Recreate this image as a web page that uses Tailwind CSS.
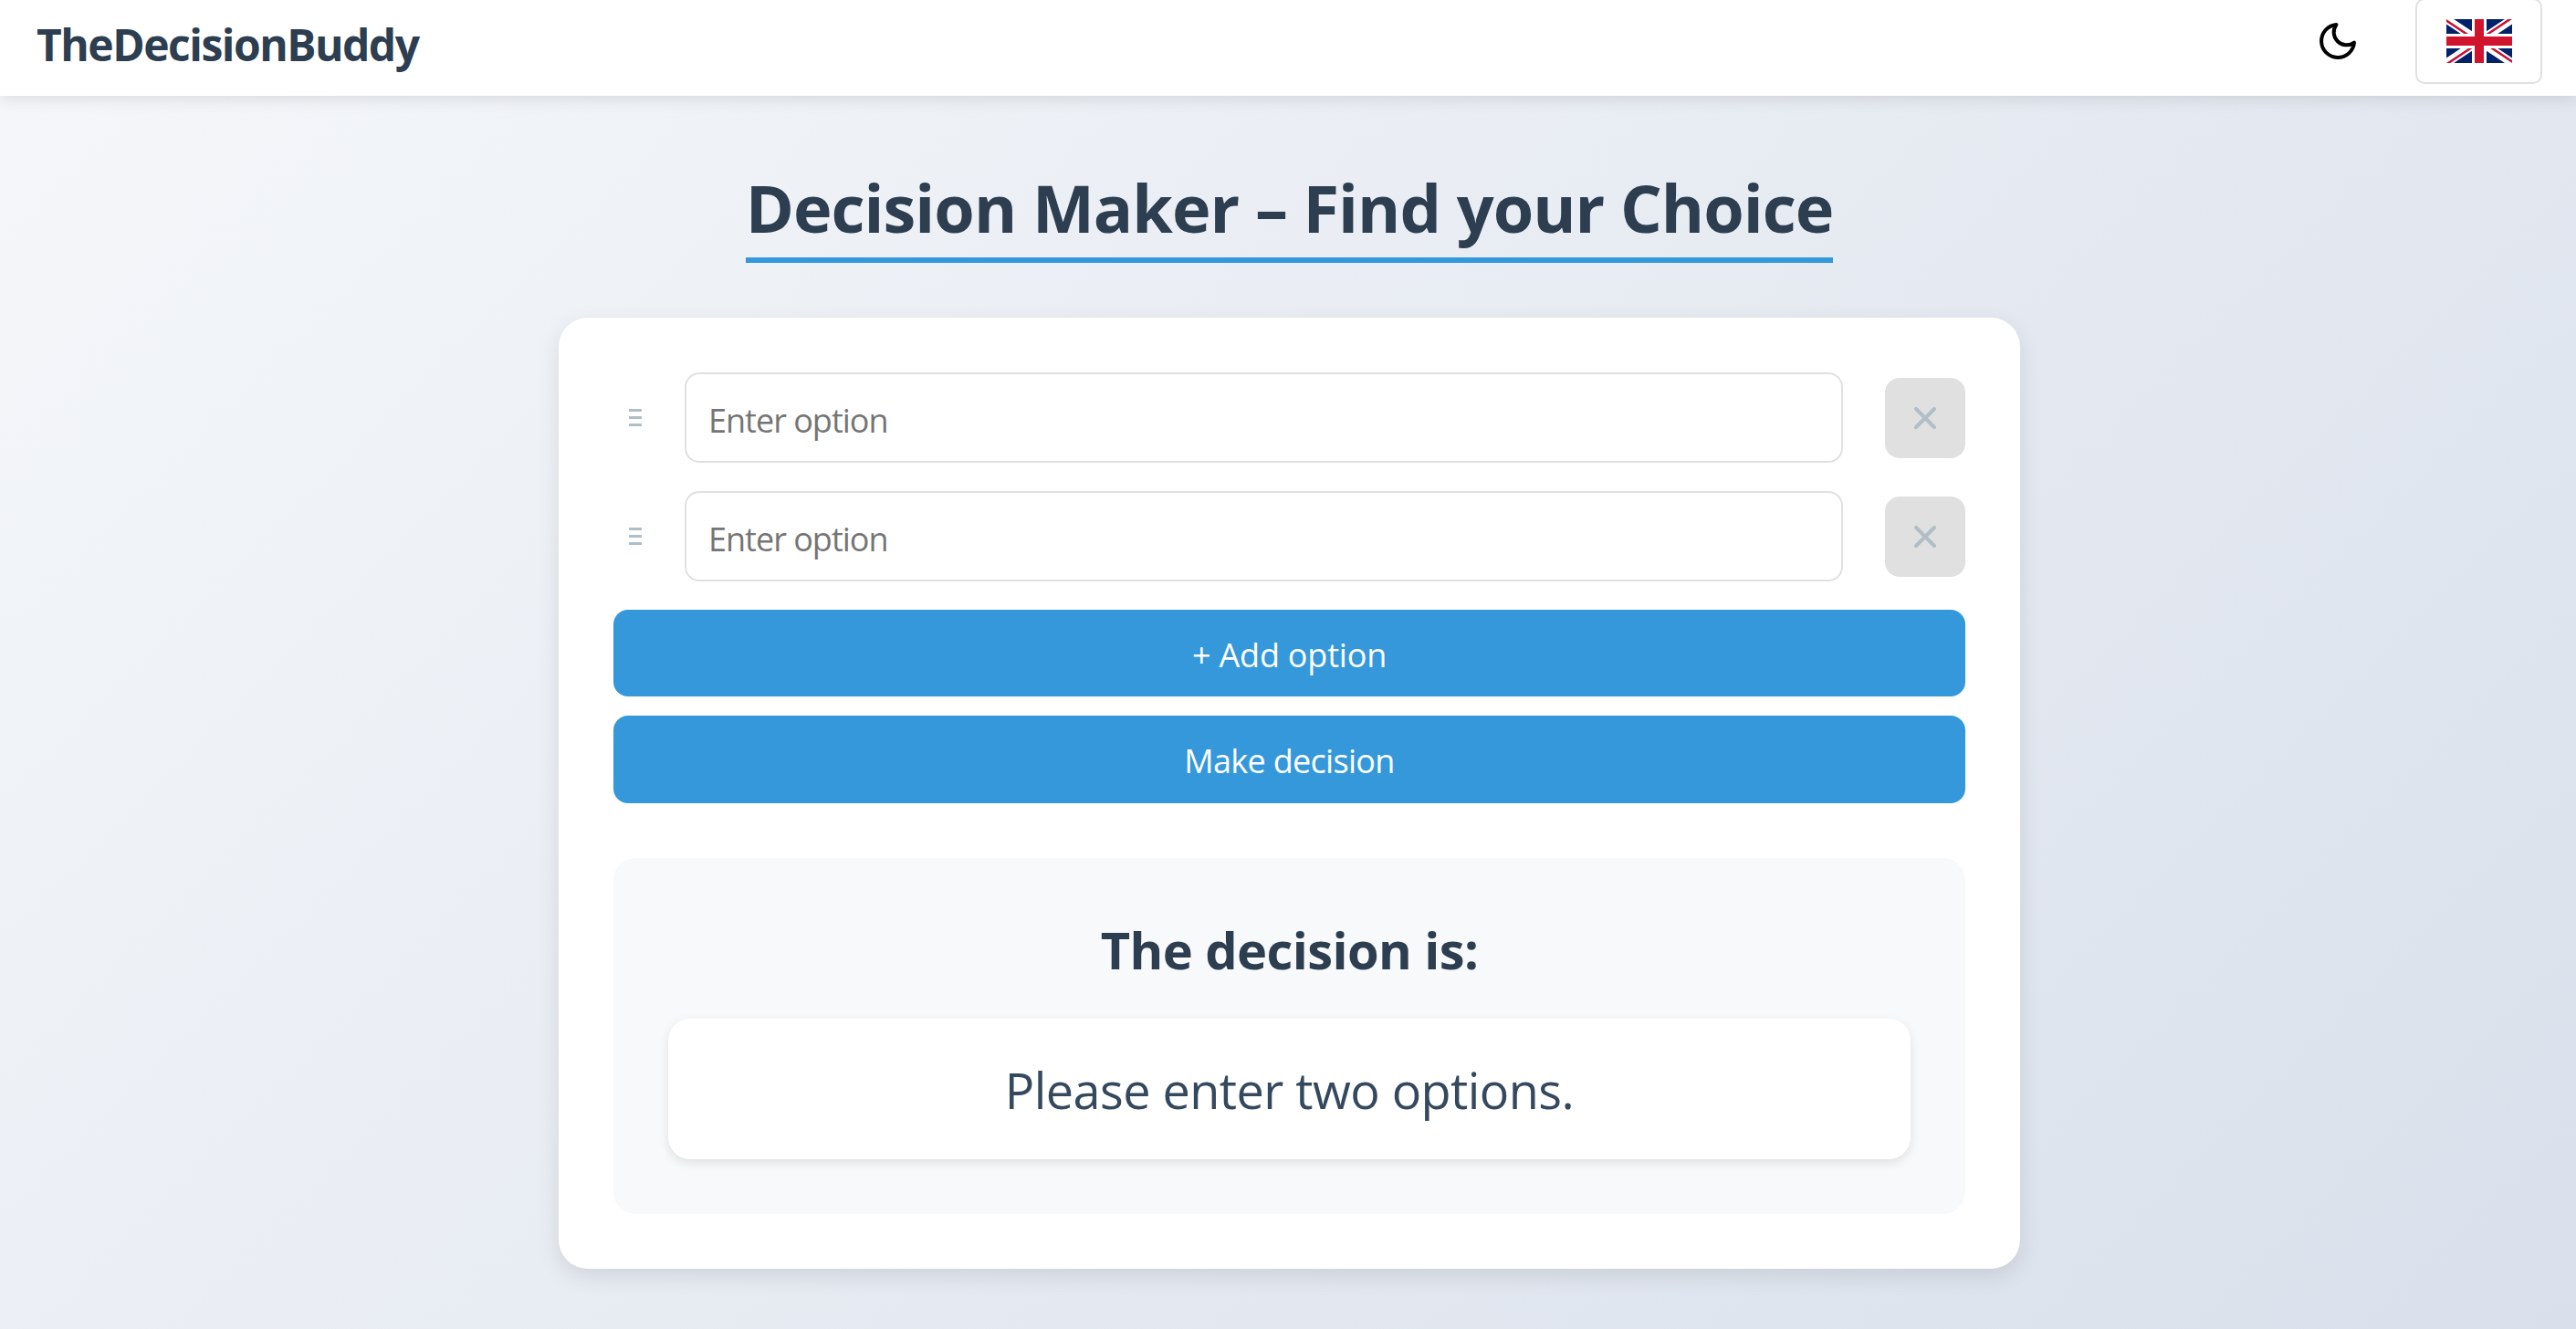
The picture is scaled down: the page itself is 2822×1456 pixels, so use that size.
<!DOCTYPE html>
<html lang="en">
<head>
  <meta charset="UTF-8" />
  <title>TheDecisionBuddy</title>
  <script src="https://cdn.jsdelivr.net/npm/@tailwindcss/browser@4"></script>
</head>
<body class="min-h-screen bg-[linear-gradient(135deg,#f5f7fa,#d9e0eb)] font-['Open_Sans',sans-serif] text-[#2c3e50] overflow-hidden">
  <header class="h-[105px] bg-white shadow-[0_4px_16px_rgba(0,0,0,0.1)] flex items-center justify-between pl-[40px] pr-[37px]">
    <div class="text-[48px] leading-[64px] font-bold tracking-[-1.5px] mt-[-8px]">TheDecisionBuddy</div>
    <div class="flex items-center gap-[61px] mt-[-15px]">
      <svg class="w-[48px] h-[48px]" viewBox="0 0 24 24" fill="none" stroke="#000" stroke-width="2" stroke-linecap="round" stroke-linejoin="round"><path d="M21 12.79A9 9 0 1 1 11.21 3 7 7 0 0 0 21 12.79z"/></svg>
      <button class="w-[139px] h-[94px] border-2 border-[#e0e0e0] rounded-[10px] bg-white flex items-center justify-center">
        <svg class="w-[72px] h-[48px]" viewBox="0 0 72 48">
          <clipPath id="uk"><path d="M36,24 h36 v24 z v24 h-36 z h-36 v-24 z v-24 h36 z"/></clipPath>
          <rect width="72" height="48" fill="#012169"/>
          <path d="M0,0 L72,48 M72,0 L0,48" stroke="#fff" stroke-width="9"/>
          <path d="M0,0 L72,48 M72,0 L0,48" stroke="#c8102e" stroke-width="5" clip-path="url(#uk)"/>
          <path d="M36,0 V48 M0,24 H72" stroke="#fff" stroke-width="16"/>
          <path d="M36,0 V48 M0,24 H72" stroke="#d0142e" stroke-width="10"/>
        </svg>
      </button>
    </div>
  </header>

  <main class="flex flex-col items-center pl-[3px]">
    <h1 class="mt-[76px] mb-[60px] text-[72px] leading-[92px] font-bold tracking-[-1px] border-b-[6px] border-[#3498db] pb-[9px]">Decision Maker – Find your Choice</h1>

    <section class="w-[1601px] h-[1042px] bg-white rounded-[32px] p-[60px] shadow-[0_8px_24px_rgba(0,0,0,0.1)]">
      <div class="flex flex-col gap-[31px]">
        <div class="flex items-center h-[99px]">
          <div class="w-[78px] pl-[17px]">
            <div class="w-[14px] flex flex-col gap-[5px]">
              <span class="h-[3px] bg-[#b0bec5]"></span><span class="h-[3px] bg-[#b0bec5]"></span><span class="h-[3px] bg-[#b0bec5]"></span>
            </div>
          </div>
          <input class="w-[1269px] h-[99px] border-2 border-[#e0e0e0] rounded-[16px] px-[24px] pt-[5px] text-[36px] tracking-[-1px] placeholder:text-[#757575] outline-none" placeholder="Enter option" />
          <button class="ml-[46px] w-[88px] h-[88px] bg-[#e0e0e0] rounded-[16px] flex items-center justify-center">
            <svg class="w-[24px] h-[24px]" viewBox="0 0 24 24" fill="none" stroke="#b0bec5" stroke-width="4" stroke-linecap="round"><path d="M2 2 22 22M22 2 2 22"/></svg>
          </button>
        </div>
        <div class="flex items-center h-[99px]">
          <div class="w-[78px] pl-[17px]">
            <div class="w-[14px] flex flex-col gap-[5px]">
              <span class="h-[3px] bg-[#b0bec5]"></span><span class="h-[3px] bg-[#b0bec5]"></span><span class="h-[3px] bg-[#b0bec5]"></span>
            </div>
          </div>
          <input class="w-[1269px] h-[99px] border-2 border-[#e0e0e0] rounded-[16px] px-[24px] pt-[5px] text-[36px] tracking-[-1px] placeholder:text-[#757575] outline-none" placeholder="Enter option" />
          <button class="ml-[46px] w-[88px] h-[88px] bg-[#e0e0e0] rounded-[16px] flex items-center justify-center">
            <svg class="w-[24px] h-[24px]" viewBox="0 0 24 24" fill="none" stroke="#b0bec5" stroke-width="4" stroke-linecap="round"><path d="M2 2 22 22M22 2 2 22"/></svg>
          </button>
        </div>
        <div class="flex flex-col gap-[21px]">
          <button class="h-[95px] pt-[5px] bg-[#3498db] text-white rounded-[16px] text-[36px] tracking-[-0.2px]">+ Add option</button>
          <button class="h-[96px] pt-[4px] bg-[#3498db] text-white rounded-[16px] text-[36px] tracking-[-0.7px]">Make decision</button>
        </div>
      </div>

      <div class="mt-[60px] h-[390px] bg-[#f8f9fa] rounded-[24px] px-[60px] pt-[60px] flex flex-col">
        <h2 class="h-[116px] pt-[2px] text-[56px] leading-[76px] font-bold tracking-[-0.6px] text-center">The decision is:</h2>
        <div class="h-[154px] pt-[3px] bg-white rounded-[24px] shadow-[0_4px_12px_rgba(0,0,0,0.1)] flex items-center justify-center text-[54px] tracking-[-0.55px] text-[#34495e]">Please enter two options.</div>
      </div>
    </section>
  </main>
</body>
</html>
